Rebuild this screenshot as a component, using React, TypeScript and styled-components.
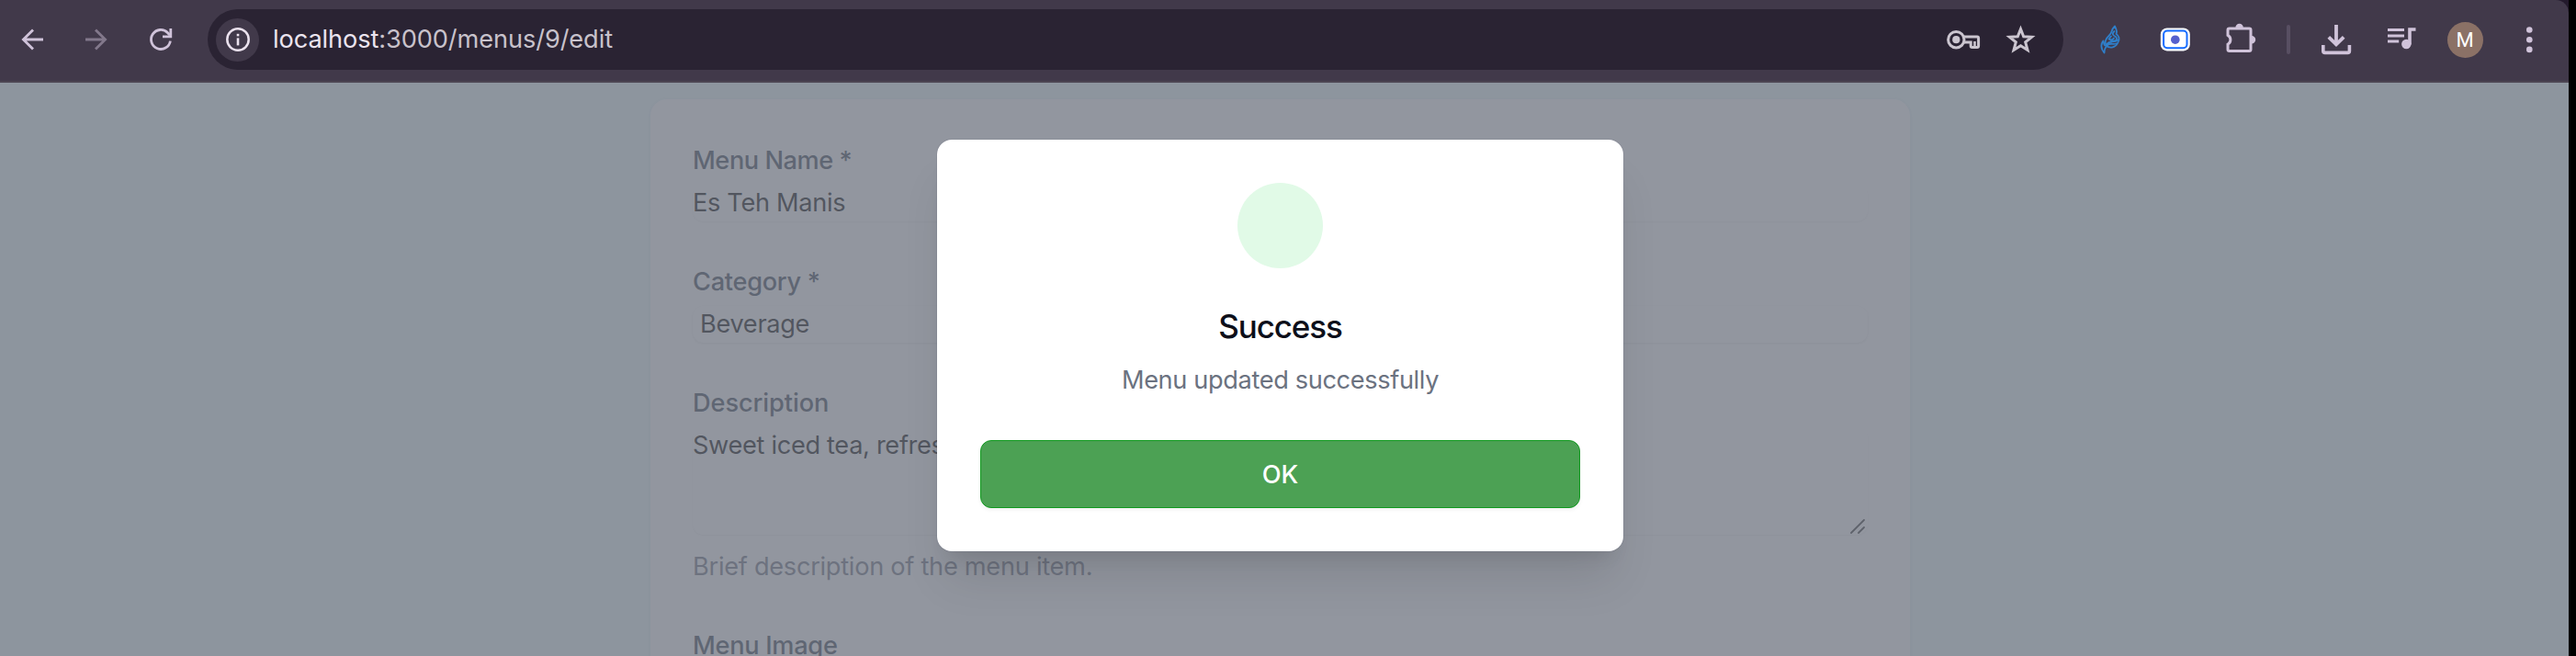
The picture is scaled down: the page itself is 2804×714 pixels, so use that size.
import React, { ReactNode } from 'react';
import styled, { createGlobalStyle } from 'styled-components';

const GlobalStyle = createGlobalStyle`
  *, *::before, *::after { box-sizing: border-box; }
  body {
    margin: 0;
    background: #000;
    font-family: Inter, "Liberation Sans", sans-serif;
  }
`;

/* ---------- browser window ---------- */

const BrowserWindow = styled.div`
  display: flex;
  flex-direction: column;
  width: 2796px;
  height: 714px;
  overflow: hidden;
  background: #231a2c;
`;

const Toolbar = styled.header`
  display: flex;
  flex: none;
  align-items: flex-start;
  height: 90px;
  padding: 10px 8px 0 0;
  background: #41394a;
  border-bottom: 2px solid #4c4552;
  border-top-right-radius: 14px;
`;

const ToolSlot = styled.div<{ $width?: number; $color?: string }>`
  display: flex;
  align-items: center;
  justify-content: center;
  flex: none;
  width: ${({ $width }) => $width ?? 70}px;
  height: 66px;
  color: ${({ $color }) => $color ?? '#d0c3da'};
`;

const Glyph = styled.svg`
  display: block;
  fill: none;
  stroke: currentColor;
  stroke-width: 3;
`;

const Omnibox = styled.div`
  display: flex;
  flex: 1;
  align-items: center;
  height: 66px;
  margin: 0 16px;
  padding: 0 11px 0 9px;
  border-radius: 33px;
  background: #2a2333;
`;

const SiteInfo = styled.div`
  display: flex;
  align-items: center;
  justify-content: center;
  width: 47px;
  height: 47px;
  border-radius: 50%;
  background: #41394a;
  color: #ebe2ee;
`;

const Url = styled.div`
  flex: 1;
  padding-left: 15px;
  color: #c8c2cb;
  font-size: 27.2px;
  line-height: 40px;
  letter-spacing: -0.1px;
`;

const Host = styled.span`
  color: #ebe4ef;
`;

const Divider = styled.div`
  width: 4px;
  height: 32px;
  margin-left: 2px;
  border-radius: 2px;
  background: #584f62;
`;

const Avatar = styled.div`
  width: 39px;
  height: 39px;
  border-radius: 50%;
  background: #8b7166;
  color: #fff;
  font: 400 22px/40px Roboto, sans-serif;
  text-align: center;
`;

/* ---------- page ---------- */

const Page = styled.main`
  position: relative;
  display: flex;
  flex: 1;
  justify-content: center;
  align-items: flex-start;
  padding: 18px 9px 0 0;
  overflow: hidden;
  background: #eafafa;
`;

const FormCard = styled.form`
  display: flex;
  flex-direction: column;
  flex: none;
  width: 1371px;
  height: 900px;
  padding: 47px 46px;
  border-radius: 18px;
  background: #fff;
  box-shadow: 0 0 0 2px rgba(70, 40, 90, 0.02), 0 2px 6px rgba(70, 40, 90, 0.04);
`;

const Field = styled.div<{ $height: number }>`
  height: ${({ $height }) => $height}px;
`;

const Label = styled.label<{ $tracking?: number }>`
  display: block;
  margin-bottom: 7px;
  color: #374151;
  font-size: 27.2px;
  font-weight: 550;
  line-height: 39px;
  letter-spacing: ${({ $tracking }) => $tracking ?? -0.3}px;
`;

const Control = styled.div<{ $height: number; $indent?: number; $raised?: boolean }>`
  position: relative;
  height: ${({ $height }) => $height}px;
  padding-left: ${({ $indent }) => $indent ?? 0}px;
  border-radius: 12px;
  color: #000;
  font-size: 27.2px;
  line-height: 39px;
  letter-spacing: -0.33px;
  box-shadow: ${({ $raised }) =>
    $raised ? '0 1px 3px rgba(0, 0, 0, 0.1)' : '0 1px 2px rgba(0, 0, 0, 0.07)'};
`;

const ResizeGrip = styled.svg`
  position: absolute;
  right: 3px;
  bottom: 1px;
  fill: none;
  stroke: #000;
  stroke-width: 1.8;
  stroke-linecap: round;
  opacity: 0.8;
`;

const HelpText = styled.p`
  margin: 15px 0 0;
  color: #6b7280;
  font-size: 27.2px;
  line-height: 39px;
  letter-spacing: -0.28px;
`;

/* ---------- dialog ---------- */

const Backdrop = styled.div`
  position: absolute;
  inset: 0;
  display: flex;
  align-items: flex-start;
  justify-content: center;
  padding: 62px 9px 0 0;
  background: rgba(110, 115, 127, 0.75);
`;

const Dialog = styled.div`
  display: flex;
  flex-direction: column;
  align-items: center;
  width: 747px;
  padding: 47px;
  border-radius: 16px;
  background: #fff;
  box-shadow: 0 0 1px rgba(50, 50, 80, 0.5), 0 39px 49px -10px rgba(0, 0, 0, 0.1), 0 16px 19px -12px rgba(0, 0, 0, 0.1);
`;

const StatusCircle = styled.div`
  width: 93px;
  height: 93px;
  border-radius: 50%;
  background: #e1fae7;
`;

const Title = styled.h3`
  margin: 39px 0 15px;
  color: #0d0f1a;
  font-size: 35px;
  font-weight: 500;
  line-height: 48px;
  letter-spacing: -1.1px;
`;

const Message = styled.p`
  margin: 0 0 46px;
  color: #6b7280;
  font-size: 27.2px;
  line-height: 39px;
  letter-spacing: -0.37px;
`;

const ConfirmButton = styled.button`
  width: 100%;
  height: 74px;
  padding: 0;
  border: 1px solid #119a1f;
  border-radius: 12px;
  background: #4ca154;
  box-shadow: 0 2px 4px rgba(0, 0, 0, 0.06);
  color: #fff;
  font: 550 27.2px/39px Inter, "Liberation Sans", sans-serif;
`;

/* Glyphs are drawn around the centre of their slot. */
const Icon = ({ children, width = 70 }: { children: ReactNode; width?: number }) => (
  <Glyph width={width} height={66} viewBox={`${-width / 2} -33 ${width} 66`}>
    {children}
  </Glyph>
);

export default function App() {
  return (
    <>
      <GlobalStyle />
      <BrowserWindow>
        <Toolbar>
          <ToolSlot>
            <Icon>
              <path d="M12 0H-10M1 -10.6L-9.6 0L1 10.6" strokeWidth="2.8" />
            </Icon>
          </ToolSlot>
          <ToolSlot $color="#82788b">
            <Icon>
              <path d="M-12 0H10M-1 -10.6L9.6 0L-1 10.6" strokeWidth="2.8" />
            </Icon>
          </ToolSlot>
          <ToolSlot>
            <Icon>
              <path d="M10.4 1.6A10.5 10.5 0 1 1 7.6 -7.3L10 -4.6" strokeWidth="2.8" />
              <path d="M10.8 -12V-3.2H2" strokeWidth="2.8" />
            </Icon>
          </ToolSlot>
          <Omnibox>
            <SiteInfo>
              <Icon width={46}>
                <circle r="11.7" strokeWidth="2.5" />
                <path d="M0 -1.6V6.4" strokeWidth="2.6" />
                <path d="M0 -6.2V-3.6" strokeWidth="2.6" />
              </Icon>
            </SiteInfo>
            <Url>
              <Host>localhost</Host>:3000/menus/9/edit
            </Url>
            <ToolSlot $width={56} $color="#cbc5cf">
              <Icon width={56}>
                <circle cx="-7.7" cy="0.2" r="8.7" />
                <circle cx="-7.7" cy="0.2" r="4.1" fill="currentColor" stroke="none" />
                <path d="M0 -3H15.2Q16.6 -3 16.6 -1.6V7Q16.6 8.5 15.2 8.5H9.6Q8.2 8.5 8.2 7V3H0" />
                <path d="M12.5 2V8" strokeWidth="2.6" />
              </Icon>
            </ToolSlot>
            <ToolSlot $color="#cbc5cf">
              <Icon>
                <path
                  transform="translate(-0.5 1.2)"
                  d="M0 -12.6L3.2 -4.4L12.1 -3.9L5.2 1.7L7.5 10.3L0 5.5L-7.5 10.3L-5.2 1.7L-12.1 -3.9L-3.2 -4.4Z"
                />
              </Icon>
            </ToolSlot>
          </Omnibox>
          <ToolSlot $color="#2f7fc9">
            <Icon>
              <g strokeWidth="1.8" strokeLinecap="round" strokeLinejoin="round">
                <path d="M5 -14.5C0 -9.5 3 -8 -1.5 -4C-6 0 -6 3 -4.5 7C0 10 6 8.5 8 4C11 -0.5 9.5 -4 6.5 -6C8 -9 6.5 -11.5 5 -14.5Z" />
                <path d="M-6.5 14.5C-11 9 -10 4 -7.5 1.5C-6 5 -8 6.5 -4 7C-6 9.5 -6.5 11 -6.5 14.5Z" />
                <path d="M4.5 -9C1 -6 3.5 -4.5 6 -3C8 -1 7 1 4.5 1.5C0 2.5 -2.5 -1 1 -3.5M-4 5C0 0.5 4 4 8.5 0.5M-3.5 6.5C0 3 3 6 6.5 4.5M-1.5 -0.5C1 1 3 0 4 -1.5" />
              </g>
            </Icon>
          </ToolSlot>
          <ToolSlot>
            <Icon>
              <g transform="translate(0.8 0)">
                <rect x="-16" y="-12.6" width="32" height="25" rx="7" fill="#fff" stroke="none" />
                <rect x="-12.7" y="-9.4" width="25.4" height="18.6" rx="4" fill="#fff" stroke="#146bff" strokeWidth="2" />
                <circle r="4.8" cy="0.2" fill="#5560cd" stroke="none" />
              </g>
            </Icon>
          </ToolSlot>
          <ToolSlot>
            <Icon>
              <g transform="translate(0.6 0)">
                <path d="M-12.6 -4.6V-10.3Q-12.6 -12 -10.9 -12H10.7Q12.4 -12 12.4 -10.3V10.8Q12.4 12.5 10.7 12.5H-10.9Q-12.6 12.5 -12.6 10.8V5.2A5.6 5.6 0 0 0 -12.6 -4.6Z" />
                <path d="M-4.2 -13A4.2 4.2 0 0 1 4.2 -13ZM13.4 -4A4.2 4.2 0 0 1 13.4 4.4Z" fill="currentColor" stroke="none" />
              </g>
            </Icon>
          </ToolSlot>
          <ToolSlot $width={36}>
            <Divider />
          </ToolSlot>
          <ToolSlot>
            <Icon>
              <path d="M0 -16V4" strokeWidth="3.8" />
              <path d="M-8.2 -2.6L0 5.4L8.2 -2.6" strokeWidth="3.8" />
              <path d="M-14.2 6V12.4Q-14.2 14.4 -12.2 14.4H12.4Q14.4 14.4 14.4 12.4V6" strokeWidth="3.6" />
            </Icon>
          </ToolSlot>
          <ToolSlot>
            <Icon>
              <path d="M-14 -10.6H4M-14 -4H4M-14 2.1H-1.8" strokeWidth="3" />
              <path d="M10 5.5V-11H16.5" strokeWidth="3.6" />
              <circle cx="6.3" cy="5" r="5.2" fill="currentColor" stroke="none" />
            </Icon>
          </ToolSlot>
          <ToolSlot>
            <Avatar>M</Avatar>
          </ToolSlot>
          <ToolSlot>
            <Icon>
              <g fill="currentColor" stroke="none" transform="translate(0.3 0)">
                <circle cy="-10.5" r="3.3" />
                <circle cy="0.2" r="3.3" />
                <circle cy="10.9" r="3.3" />
              </g>
            </Icon>
          </ToolSlot>
        </Toolbar>

        <Page>
          <FormCard>
            <Field $height={132}>
              <Label $tracking={-0.45}>Menu Name *</Label>
              <Control $height={40}>Es Teh Manis</Control>
            </Field>
            <Field $height={132}>
              <Label>Category *</Label>
              <Control $height={40} $indent={8} $raised>
                Beverage
              </Control>
            </Field>
            <Field $height={264}>
              <Label $tracking={-0.1}>Description</Label>
              <Control $height={117}>
                Sweet iced tea, refreshing
                <ResizeGrip width="16" height="16" viewBox="0 0 16 16">
                  <path d="M1 15L15 1M9 15L15 9" />
                </ResizeGrip>
              </Control>
              <HelpText>Brief description of the menu item.</HelpText>
            </Field>
            <Field $height={132}>
              <Label>Menu Image</Label>
            </Field>
          </FormCard>

          <Backdrop>
            <Dialog role="dialog">
              <StatusCircle />
              <Title>Success</Title>
              <Message>Menu updated successfully</Message>
              <ConfirmButton type="button">OK</ConfirmButton>
            </Dialog>
          </Backdrop>
        </Page>
      </BrowserWindow>
    </>
  );
}
